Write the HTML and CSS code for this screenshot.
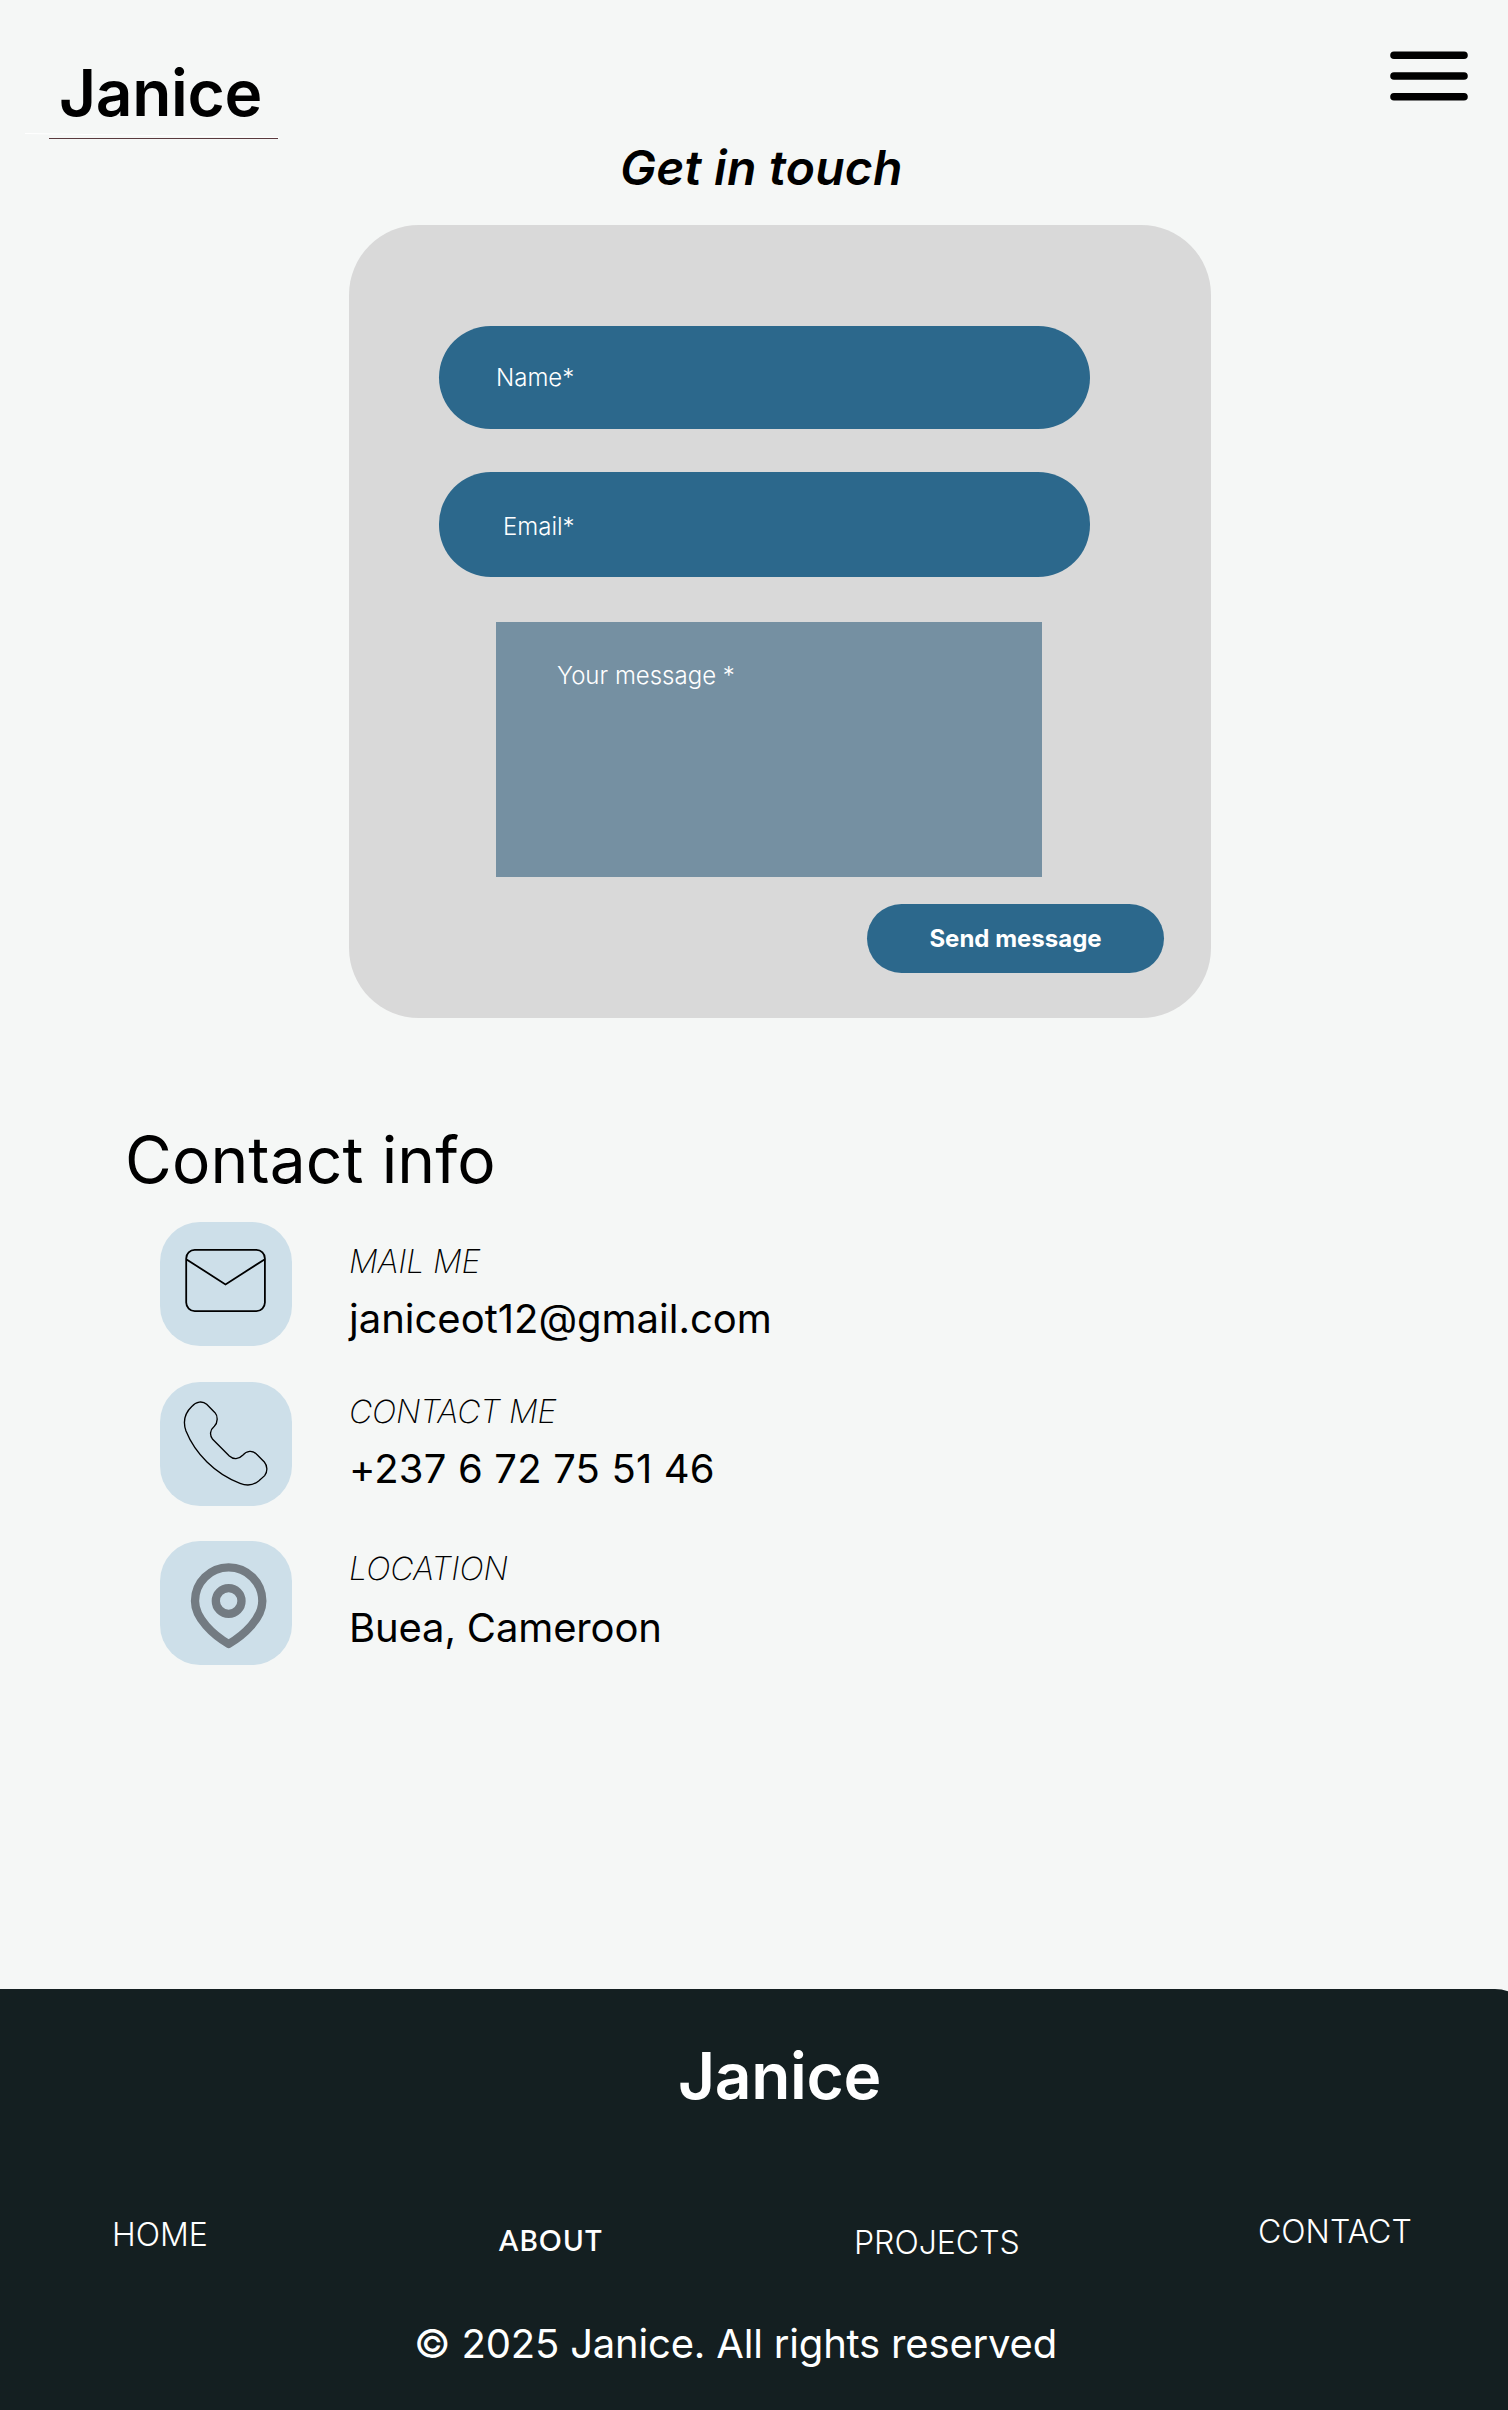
FILE: index.html
```html
<!DOCTYPE html>
<html lang="en">
<head>
<meta charset="utf-8">
<title>Janice – Contact</title>
<link rel="stylesheet" href="styles.css">
</head>
<body>
<header class="header">
  <div class="brand">Janice
    <svg class="brand-shine" width="254" height="6" viewBox="0 0 254 6"><path d="M0 .5 254 4.5" stroke="#fff"/></svg>
  </div>
  <svg class="menu" width="78" height="50" viewBox="0 0 78 50"><path d="M4 4.2H74M4 25H74M4 45.7H74" stroke="#000" stroke-width="7.6" stroke-linecap="round"/></svg>
</header>
<main class="main">
  <h1 class="title">Get in touch</h1>
  <form class="card">
    <div class="field field-name">Name*</div>
    <div class="field field-email">Email*</div>
    <div class="message">Your message *</div>
    <button class="send" type="button">Send message</button>
  </form>
  <section class="info">
    <h2 class="info-title">Contact info</h2>
    <div class="row">
      <svg class="tile" viewBox="0 0 132 124"><g fill="none" stroke="#000" stroke-width="1.8"><rect x="26.2" y="27.9" width="78.7" height="61.2" rx="8.5"/><path d="M26.2 37.2 65.5 62.4 104.9 37.2"/></g></svg>
      <div class="detail detail-mail"><p class="label">MAIL ME</p><p class="value">janiceot12@gmail.com</p></div>
    </div>
    <div class="row">
      <svg class="tile" viewBox="0 0 132 124"><path transform="scale(.3333) translate(-180 -66)" fill="none" stroke="#000" stroke-width="4" d="M320 133 345 158C354 168 354 188 343 199C330 210 328 226 338 238L388 288C400 299 416 299 428 286C440 272 458 270 470 283L493 306C503 318 503 335 494 347L476 363C460 376 440 378 420 370C345 342 285 280 258 213C248 185 254 160 276 139C288 124 308 122 320 133Z"/></svg>
      <div class="detail detail-phone"><p class="label">CONTACT ME</p><p class="value">+237 6 72 75 51 46</p></div>
    </div>
    <div class="row">
      <svg class="tile" viewBox="0 0 132 124"><g transform="scale(.3333) translate(-180 -543)" fill="none" stroke="#737b82" stroke-width="25" stroke-linejoin="round"><circle cx="386" cy="723" r="38.5"/><path d="M386 852C340 825 285 775 285 723A101 101 0 1 1 487 723C487 775 432 825 386 852Z"/></g></svg>
      <div class="detail detail-place"><p class="label">LOCATION</p><p class="value">Buea, Cameroon</p></div>
    </div>
  </section>
</main>
<footer class="footer">
  <div class="footer-brand">Janice</div>
  <nav class="nav">
    <a class="link-home">HOME</a>
    <a class="link-about">ABOUT</a>
    <a class="link-projects">PROJECTS</a>
    <a class="link-contact">CONTACT</a>
  </nav>
  <p class="copyright">© 2025 Janice. All rights reserved</p>
</footer>
</body>
</html>
```
FILE: styles.css
```css
* { box-sizing: border-box; }
body {
  margin: 0;
  height: 2410px;
  display: flex;
  flex-direction: column;
  overflow: hidden;
  background: #f5f7f6;
  color: #000;
  font-family: Inter, "Liberation Sans", sans-serif;
}
h1, h2, p { margin: 0; }

.header {
  height: 139px;
  flex: none;
  display: flex;
  justify-content: space-between;
  padding: 0 40px 0 49px;
}
.brand {
  position: relative;
  width: 229px;
  padding: 54px 0 0 10px;
  border-bottom: 1px solid #5a3a3e;
  font-size: 64px;
  font-weight: 600;
  line-height: 78px;
  letter-spacing: -0.3px;
}
.brand-shine { position: absolute; left: -24px; bottom: -1px; z-index: -1; }
.menu { margin-top: 51px; }

.main { flex: none; height: 1850px; }
.title {
  margin-left: 620px;
  font-size: 48px;
  font-weight: 600;
  font-style: italic;
  line-height: 58px;
  letter-spacing: 0.25px;
}
.card {
  display: flex;
  flex-direction: column;
  align-items: flex-start;
  width: 862px;
  height: 793px;
  margin: 28px 0 0 349px;
  padding: 101px 47px 0 90px;
  border-radius: 70px;
  background: #d9d9d9;
  color: #fff;
  font-size: 24px;
  font-weight: 350;
  line-height: 30px;
}
.field {
  width: 651px;
  border-radius: 52px;
  background: #2c688c;
}
.field-name { height: 103px; padding: 37px 0 0 57px; }
.field-email { height: 105px; margin-top: 43px; padding: 40px 0 0 64px; }
.message {
  width: 546px;
  height: 255px;
  margin: 45px 0 27px 57px;
  padding: 39px 0 0 61px;
  background: #7590a2;
}
.send {
  align-self: flex-end;
  width: 297px;
  height: 69px;
  padding: 0;
  border: 0;
  border-radius: 35px;
  background: #2c688c;
  color: #fff;
  font: 700 24px/30px Inter, "Liberation Sans", sans-serif;
}

.info { padding: 103px 0 0 125px; }
.info-title {
  margin-bottom: 23px;
  font-size: 64px;
  font-weight: 400;
  line-height: 78px;
  letter-spacing: 0.13px;
}
.row {
  display: flex;
  gap: 57px;
  height: 124px;
  margin: 0 0 36px 35px;
}
.row + .row { margin-bottom: 35px; }
.tile {
  flex: none;
  width: 132px;
  height: 124px;
  border-radius: 40px;
  background: #cddfe9;
}
.detail-mail { padding-top: 21px; }
.detail-phone { padding-top: 11px; }
.detail-place { padding-top: 9px; }
.label {
  margin-bottom: 14px;
  font-size: 32px;
  font-weight: 200;
  font-style: italic;
  line-height: 38px;
  letter-spacing: -0.2px;
}
.detail-place .label { margin-bottom: 16px; letter-spacing: 0; }
.value { font-size: 40px; line-height: 48px; white-space: nowrap; }
.detail-phone .value { letter-spacing: 0.17px; }
.detail-place .value { letter-spacing: -0.15px; }

.footer {
  flex: none;
  width: 1535px;
  height: 421px;
  padding-top: 48px;
  border-top-right-radius: 40px;
  background: #141f21;
  color: #fff;
}
.footer-brand {
  margin-left: 678px;
  font-size: 64px;
  font-weight: 600;
  line-height: 78px;
  letter-spacing: -0.3px;
}
.nav {
  display: grid;
  grid-template-columns: 387px 355px 404px auto;
  height: 205px;
  padding: 98px 0 0 112px;
  font-size: 32px;
  font-weight: 320;
  line-height: 38px;
}
.link-home { padding-top: 3px; }
.link-about {
  padding-top: 8px;
  font-family: Lato, sans-serif;
  font-size: 28px;
  font-weight: 600;
  letter-spacing: 1.3px;
}
.link-projects { padding-top: 11px; }
.copyright { margin-left: 414px; font-size: 40px; line-height: 48px; letter-spacing: -0.18px; }
```
